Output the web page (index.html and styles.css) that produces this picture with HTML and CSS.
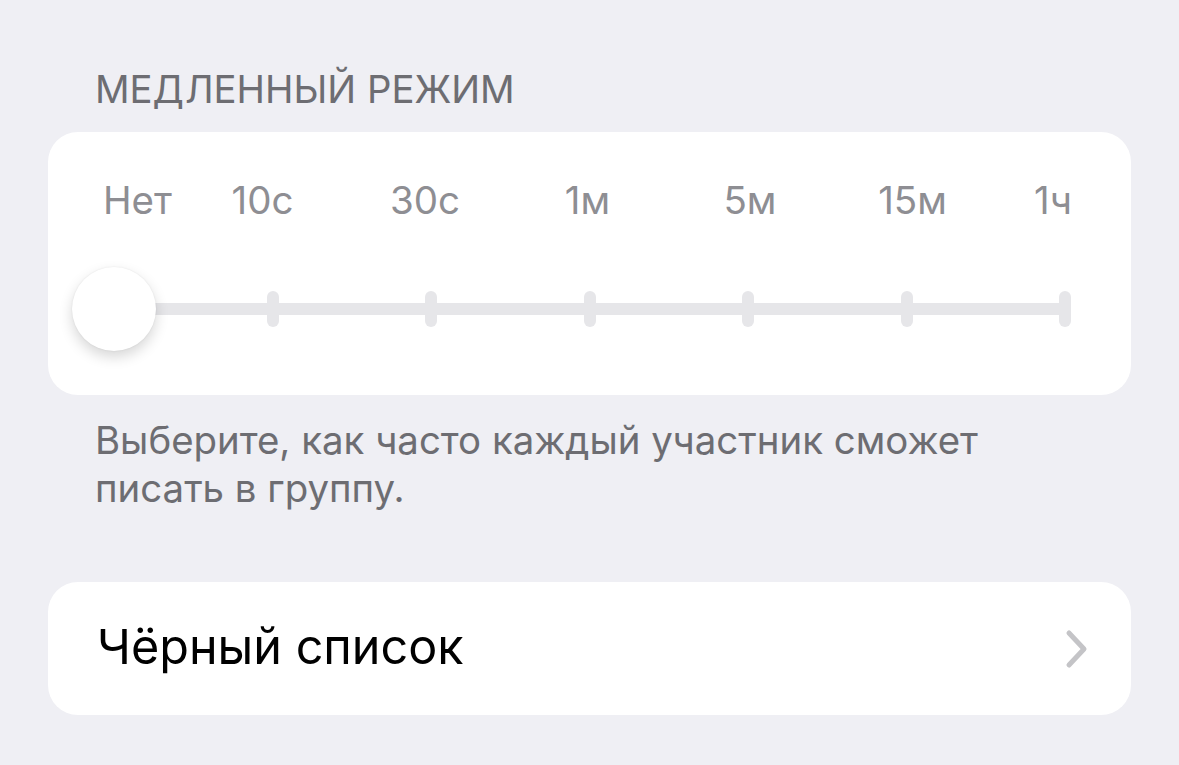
FILE: index.html
```html
<!DOCTYPE html>
<html>
<head>
    <meta charset="UTF-8">
    <title>Медленный режим</title>
    <link rel="stylesheet" href="styles.css">
</head>
<body>
<div class="page">
    <div class="section-title">МЕДЛЕННЫЙ РЕЖИМ</div>
    <div class="card slow-card">
        <div class="labels">
            <span class="first">Нет</span>
            <span>10с</span>
            <span>30с</span>
            <span>1м</span>
            <span>5м</span>
            <span>15м</span>
            <span class="last">1ч</span>
        </div>
        <div class="slider">
            <i></i><i></i><i></i><i></i><i></i><i></i><i></i>
            <div class="thumb"></div>
        </div>
    </div>
    <div class="section-footer">Выберите, как часто каждый участник сможет<br>писать в группу.</div>

    <div class="card row">
        <span class="row-title">Чёрный список</span>
        <svg class="chevron" width="24" height="40" viewBox="0 0 24 40">
            <path d="M4 4 L19 20 L4 36" fill="none" stroke="#c4c4c7" stroke-width="5" stroke-linecap="round" stroke-linejoin="round"/>
        </svg>
    </div>
</div>
</body>
</html>
```

FILE: styles.css
```css
body{
    margin: 0;
    background-color: #efeff4;
    font-family: Inter, "Noto Sans", sans-serif;
}
.page{
    padding: 65px 48px 0 48px;
}
.section-title{
    padding-left: 47px;
    font-size: 38.3px;
    line-height: 48px;
    color: #6d6d72;
    margin-bottom: 19px;
}
.card{
    background-color: #fff;
    border-radius: 30px;
}
.slow-card{
    padding: 44px 59px 44px 55px;
}
.labels{
    display: grid;
    grid-template-columns: 1fr repeat(5, 162.5px) 1fr;
    font-size: 38.5px;
    line-height: 48px;
    color: #8e8e93;
}
.labels span{
    text-align: center;
}
.labels .first{
    text-align: left;
}
.labels .last{
    text-align: right;
}
.slider{
    position: relative;
    display: flex;
    justify-content: space-between;
    align-items: center;
    height: 84px;
    margin: 43px 1px 0 5px;
}
.slider:before{
    content: "";
    position: absolute;
    left: 6px;
    right: 6px;
    top: 36px;
    height: 12px;
    background-color: #e6e6e9;
}
.slider i{
    position: relative;
    width: 12px;
    height: 36px;
    border-radius: 6px;
    background-color: #e6e6e9;
}
.thumb{
    position: absolute;
    left: -36px;
    top: 0;
    width: 84px;
    height: 84px;
    border-radius: 50%;
    background-color: #fff;
    box-shadow: 0 6px 14px rgba(0,0,0,0.16), 0 0 2px rgba(0,0,0,0.08);
}
.section-footer{
    margin-top: 21px;
    padding-left: 47px;
    font-size: 38.4px;
    line-height: 48px;
    color: #6d6d72;
}
.row{
    margin-top: 70px;
    height: 133px;
    display: flex;
    align-items: center;
    justify-content: space-between;
    padding: 0 42px 0 49px;
}
.row-title{
    font-size: 48.5px;
    color: #000;
    margin-top: -4px;
}
.chevron{
    display: block;
}
```
